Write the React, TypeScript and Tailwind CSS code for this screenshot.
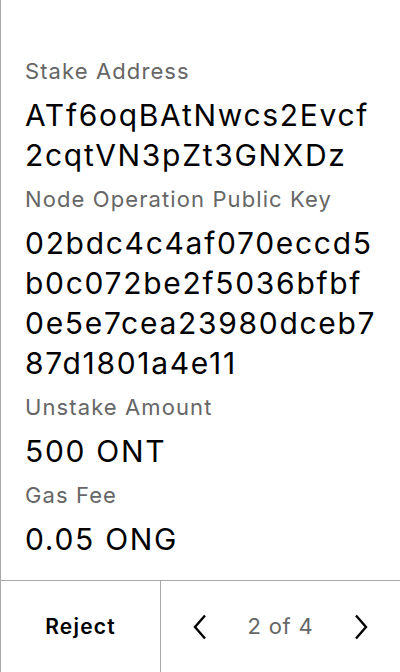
import React from 'react';

const fields = [
  { label: 'Stake Address', value: ['ATf6oqBAtNwcs2Evcf', '2cqtVN3pZt3GNXDz'] },
  {
    label: 'Node Operation Public Key',
    value: ['02bdc4c4af070eccd5', 'b0c072be2f5036bfbf', '0e5e7cea23980dceb7', '87d1801a4e11'],
  },
  { label: 'Unstake Amount', value: ['500 ONT'] },
  { label: 'Gas Fee', value: ['0.05 ONG'] },
];

export default function App() {
  return (
    <div
      className="h-[672px] w-[400px] flex flex-col bg-white border-l border-[#a8a8a8]"
      style={{ fontFamily: 'Inter, "Noto Sans", sans-serif' }}
    >
      {/* Detalles de la transacción */}
      <div className="flex-1 px-[24px] pt-[57px] flex flex-col gap-[10px]">
        {fields.map((f) => (
          <React.Fragment key={f.label}>
            <p className="text-[22px] leading-[28px] tracking-[1.1px] text-[#666]">{f.label}</p>
            <div className="text-[30px] leading-[40px] tracking-[1.7px] text-black">
              {f.value.map((line) => (
                <div key={line}>{line}</div>
              ))}
            </div>
          </React.Fragment>
        ))}
      </div>

      {/* Footer: rechazar y paginación */}
      <div className="h-[92px] flex border-t border-[#a8a8a8]">
        <button className="w-[160px] border-r border-[#a8a8a8] text-[21px] font-semibold tracking-[1.2px] text-black">
          Reject
        </button>
        <div className="flex-1 flex items-center justify-between px-[32px]">
          <svg className="w-[14px] h-[26px]" viewBox="0 0 14 26" fill="none" stroke="black" strokeWidth="2.4">
            <path d="M12 1.5L2 13l10 11.5" />
          </svg>
          <span className="text-[22px] tracking-[0.8px] text-[#666]">2 of 4</span>
          <svg className="w-[14px] h-[26px]" viewBox="0 0 14 26" fill="none" stroke="black" strokeWidth="2.4">
            <path d="M2 1.5L12 13 2 24.5" />
          </svg>
        </div>
      </div>
    </div>
  );
}
